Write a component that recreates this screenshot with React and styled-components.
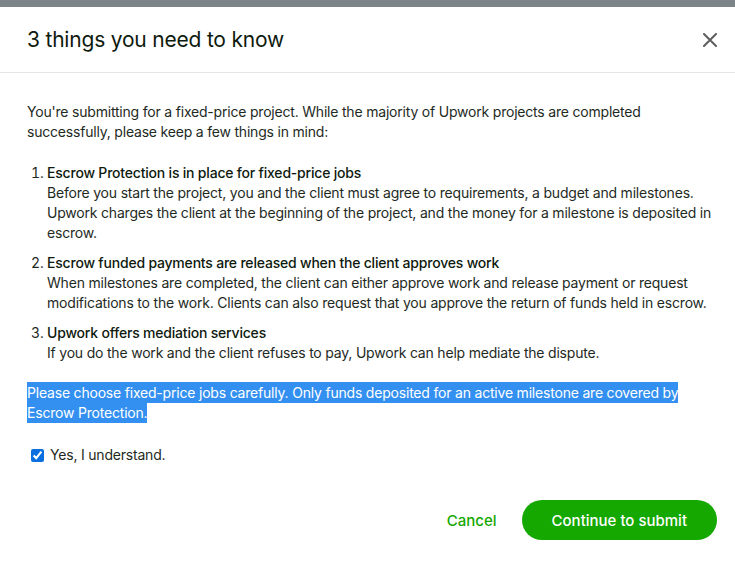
import React, { useState } from "react";
import styled, { createGlobalStyle } from "styled-components";

const GlobalStyle = createGlobalStyle`
  html, body {
    margin: 0;
    padding: 0;
    background: #7d8487;
  }
  body {
    font-family: Inter, "Liberation Sans", Arial, sans-serif;
    color: #001e00;
  }
`;

const Overlay = styled.div`
  padding-top: 7px;
  height: 562px;
  box-sizing: border-box;
`;

const Modal = styled.div`
  background: #fff;
  height: 100%;
  display: flex;
  flex-direction: column;
`;

const Header = styled.div`
  display: flex;
  align-items: center;
  justify-content: space-between;
  height: 65px;
  padding: 0 17px 0 27px;
  border-bottom: 1px solid #e4e6e4;
`;

const Title = styled.h2`
  margin: 0;
  font-size: 21px;
  font-weight: 400;
  letter-spacing: -0.2px;
  color: #0e1a0e;
`;

const CloseButton = styled.button`
  border: 0;
  background: none;
  padding: 0;
  width: 16px;
  height: 16px;
  display: flex;
  align-items: center;
  justify-content: center;
  cursor: pointer;
`;

const Body = styled.div`
  padding: 29px 20px 0 27px;
  font-size: 14px;
  line-height: 20px;
  letter-spacing: -0.2px;
  color: #1e2a1e;
`;

const Para = styled.p`
  margin: 0 0 21px 0;
`;

const List = styled.ol`
  margin: 0 0 20px 0;
  padding-left: 20px;
`;

const Item = styled.li`
  margin-bottom: 10px;
  &:last-child {
    margin-bottom: 0;
  }
`;

const ItemTitle = styled.div`
  font-weight: 500;
  color: #0e1a0e;
`;

const Highlight = styled.span`
  background: #3390f0;
  color: #fff;
  padding: 2px 0;
  -webkit-box-decoration-break: clone;
  box-decoration-break: clone;
`;

const CheckRow = styled.label`
  display: flex;
  align-items: center;
  gap: 6px;
  margin-top: 22px;
  padding-left: 4px;
  cursor: pointer;
`;

const Check = styled.input`
  margin: 0;
  width: 13px;
  height: 13px;
  accent-color: #0b6fe0;
`;

const Footer = styled.div`
  margin-top: auto;
  display: flex;
  justify-content: flex-end;
  align-items: center;
  gap: 25px;
  padding: 0 18px 22px 0;
`;

const Button = styled.button`
  font-family: Inter, "Liberation Sans", Arial, sans-serif;
  font-size: 15px;
  font-weight: 500;
  border: 0;
  cursor: pointer;
  color: ${(p) => (p.$primary ? "#fff" : "#14a800")};
  background: ${(p) => (p.$primary ? "#14a800" : "transparent")};
  height: 40px;
  border-radius: 20px;
  padding: ${(p) => (p.$primary ? "0 30px" : "0")};
  min-width: ${(p) => (p.$primary ? "194px" : "auto")};
`;

const items = [
  {
    title: "Escrow Protection is in place for fixed-price jobs",
    text: "Before you start the project, you and the client must agree to requirements, a budget and milestones. Upwork charges the client at the beginning of the project, and the money for a milestone is deposited in escrow.",
  },
  {
    title: "Escrow funded payments are released when the client approves work",
    text: "When milestones are completed, the client can either approve work and release payment or request modifications to the work. Clients can also request that you approve the return of funds held in escrow.",
  },
  {
    title: "Upwork offers mediation services",
    text: "If you do the work and the client refuses to pay, Upwork can help mediate the dispute.",
  },
];

export default function App() {
  const [agreed, setAgreed] = useState(true);

  return (
    <>
      <GlobalStyle />
      <Overlay>
        <Modal>
          <Header>
            <Title>3 things you need to know</Title>
            <CloseButton aria-label="Close">
              <svg width="14" height="14" viewBox="0 0 14 14">
                <path d="M1 1 L13 13 M13 1 L1 13" stroke="#5e5e5e" strokeWidth="2" strokeLinecap="round" />
              </svg>
            </CloseButton>
          </Header>
          <Body>
            <Para>
              You're submitting for a fixed-price project. While the majority of Upwork projects are completed
              successfully, please keep a few things in mind:
            </Para>
            <List>
              {items.map((it) => (
                <Item key={it.title}>
                  <ItemTitle>{it.title}</ItemTitle>
                  <div>{it.text}</div>
                </Item>
              ))}
            </List>
            <Para style={{ marginBottom: 0 }}>
              <Highlight>
                Please choose fixed-price jobs carefully. Only funds deposited for an active milestone are covered by
                Escrow Protection.
              </Highlight>
            </Para>
            <CheckRow>
              <Check type="checkbox" checked={agreed} onChange={(e) => setAgreed(e.target.checked)} />
              Yes, I understand.
            </CheckRow>
          </Body>
          <Footer>
            <Button>Cancel</Button>
            <Button $primary>Continue to submit</Button>
          </Footer>
        </Modal>
      </Overlay>
    </>
  );
}
